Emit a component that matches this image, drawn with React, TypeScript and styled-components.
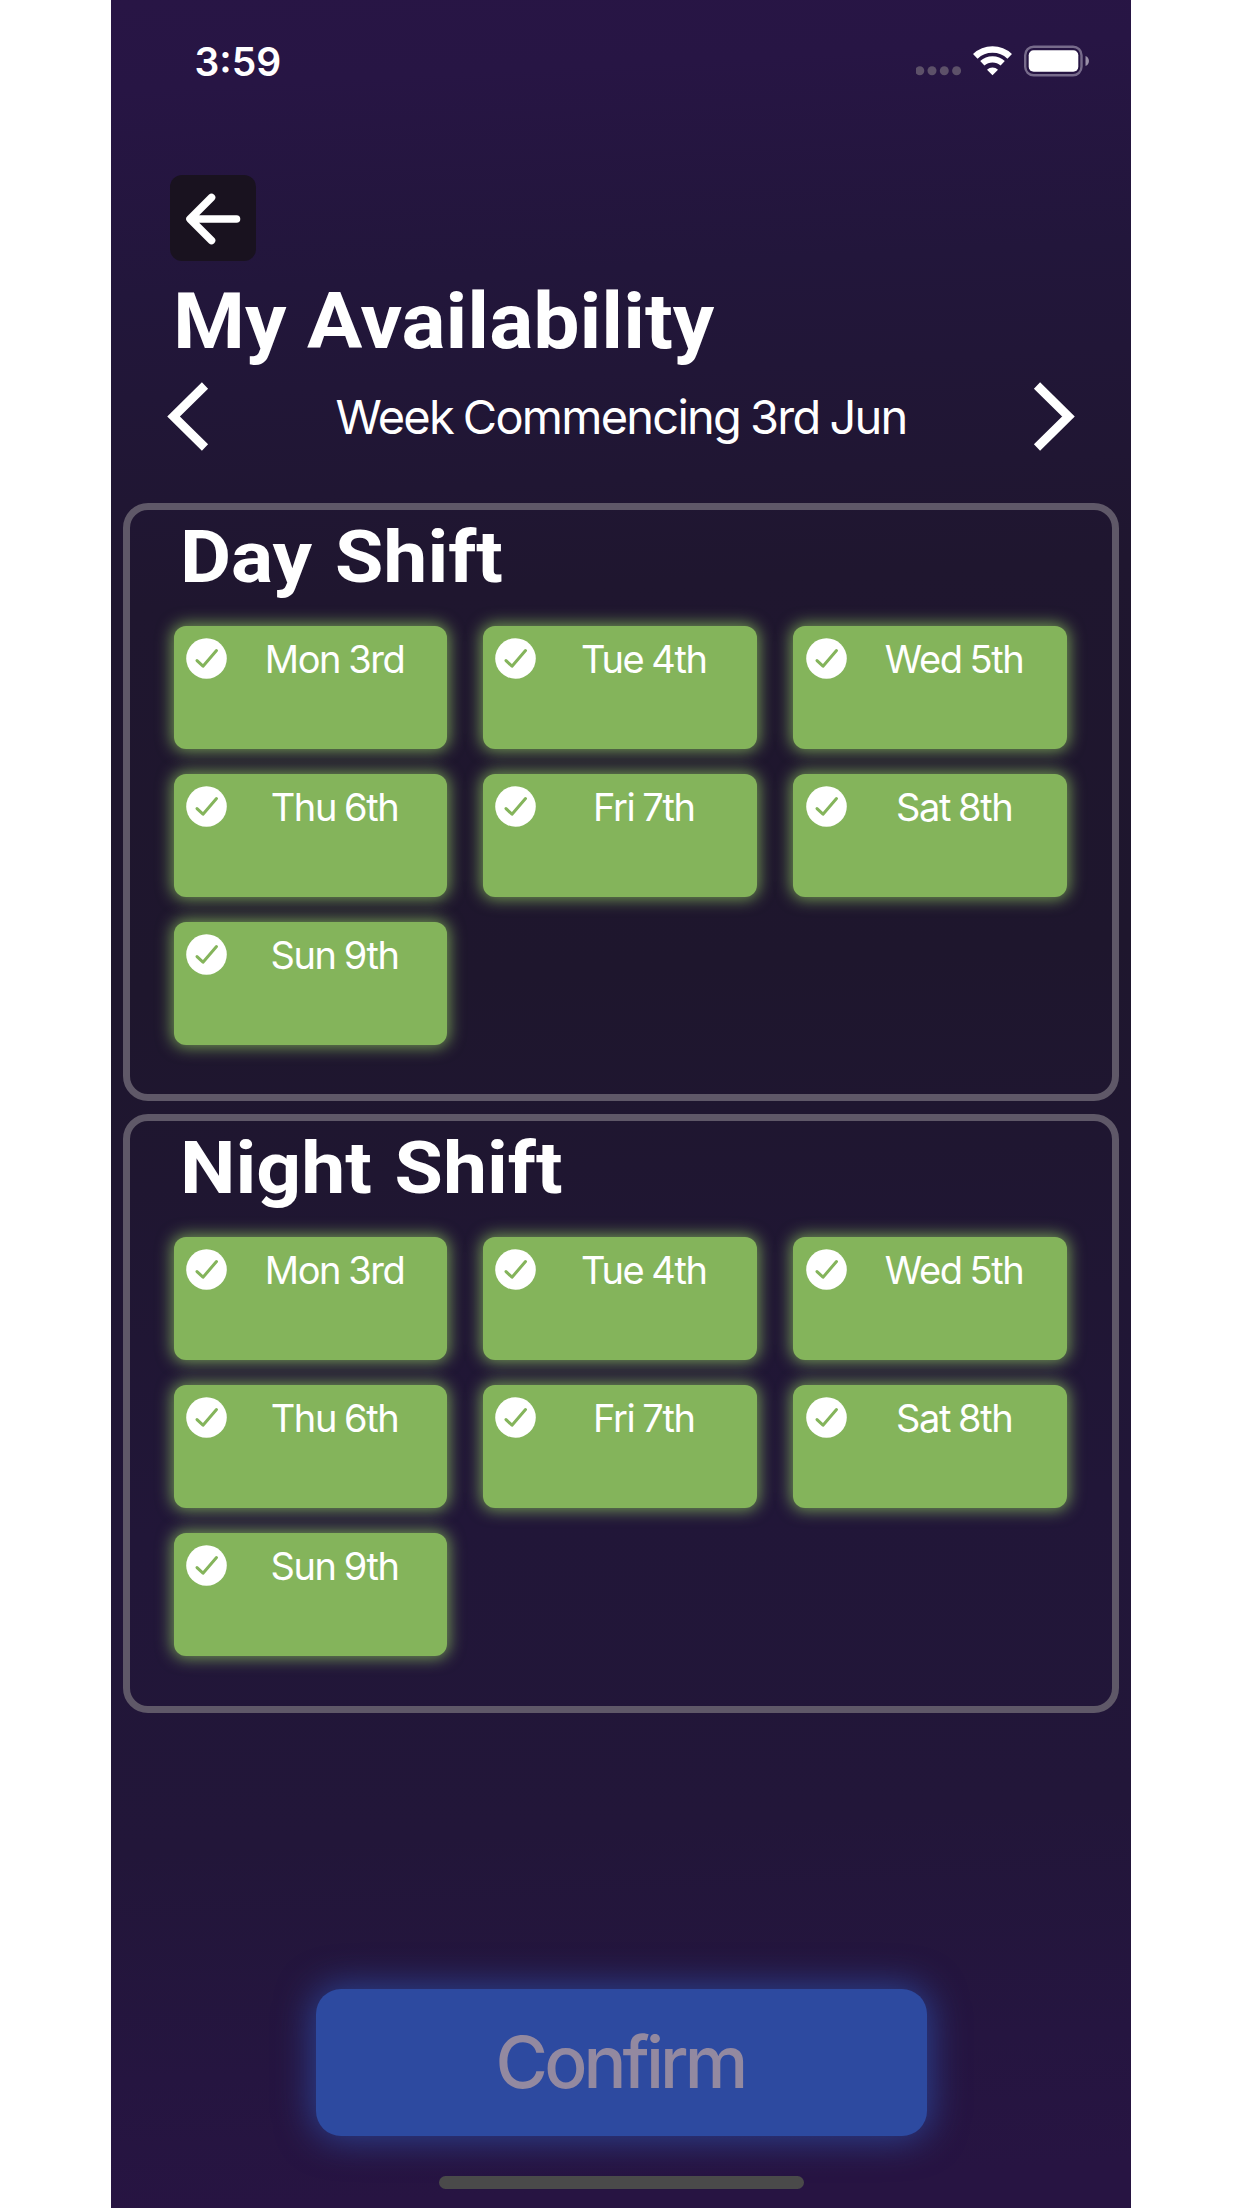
import React from "react";
import styled, { createGlobalStyle } from "styled-components";

const GlobalStyle = createGlobalStyle`
  * { box-sizing: border-box; }
  body {
    margin: 0;
    background: #ffffff;
    font-family: Inter, Roboto, sans-serif;
  }
`;

const Phone = styled.main`
  display: flex;
  flex-direction: column;
  width: 1020px;
  height: 2208px;
  margin-left: 111px;
  overflow: hidden;
  color: #ffffff;
  background: linear-gradient(177deg, #281545 0%, #271544 4%, #22163b 13%, #1f162f 27%, #1e162d 44%, #211638 68%, #221639 82%, #251540 92%, #271442 98%, #271442 100%);
`;

const StatusBar = styled.header`
  display: flex;
  justify-content: space-between;
  align-items: center;
  height: 122px;
  padding: 0 41px 0 83.5px;
`;

const Clock = styled.time`
  padding-top: 1px;
  font-size: 39px;
  font-weight: 600;
  line-height: 48px;
`;

const StatusIcons = styled.svg`
  display: block;
  width: 174px;
  height: 34px;
`;

const BackButton = styled.button`
  display: flex;
  align-items: center;
  justify-content: center;
  width: 86px;
  height: 86px;
  margin: 53px 0 0 59px;
  padding: 1px 0 0;
  border: 0;
  border-radius: 12px;
  background: #19121f;
`;

const Title = styled.h1`
  margin: 15px 0 0 62px;
  font-family: Roboto, sans-serif;
  font-size: 78px;
  font-weight: 700;
  line-height: 92px;
  height: 90px;
  white-space: nowrap;
  transform: scaleX(1.056);
  transform-origin: left center;
`;

const WeekNav = styled.nav`
  display: flex;
  align-items: center;
  justify-content: space-between;
  height: 69px;
  margin: 16px 56px 51.5px;
`;

const ArrowButton = styled.button`
  display: flex;
  padding: 0;
  border: 0;
  background: none;
`;

const WeekLabel = styled.span`
  font-size: 47px;
  line-height: 60px;
  letter-spacing: -1.75px;
  word-spacing: -1.6px;
  white-space: nowrap;
`;

const Shift = styled.section`
  height: 598.8px;
  margin: 0 12px 12.5px;
  border: 7px solid #5f5868;
  border-radius: 25px;
  padding: 7px 44px 0 43.5px;
`;

const ShiftTitle = styled.h2`
  margin: 0 0 29.4px 6px;
  font-family: Roboto, sans-serif;
  font-size: 73px;
  font-weight: 700;
  line-height: 80px;
  word-spacing: 3px;
  white-space: nowrap;
  transform: scaleX(1.077);
  transform-origin: left center;
`;

const DayGrid = styled.div`
  display: grid;
  grid-template-columns: repeat(3, 273.6px);
  grid-auto-rows: 123.3px;
  gap: 24.7px 36.2px;
`;

const DayCard = styled.button`
  display: flex;
  align-items: flex-start;
  padding: 12px 5px 0 12.5px;
  border: 0;
  border-radius: 12px;
  color: #ffffff;
  background: #84b45b;
  box-shadow: 0 0 16px 2px rgba(132, 180, 91, 0.85);
  font-family: inherit;

  &:nth-child(3n + 2) {
    padding-left: 11.5px;
  }
`;

const DayLabel = styled.span`
  flex: 1;
  font-size: 38px;
  line-height: 42px;
  letter-spacing: -1.4px;
  word-spacing: -1.2px;
  text-align: center;
  white-space: nowrap;
`;

const Footer = styled.footer`
  display: flex;
  flex-direction: column;
  align-items: center;
  margin-top: auto;
  padding-bottom: 19.3px;
`;

const ConfirmButton = styled.button`
  width: 611px;
  height: 147.3px;
  padding: 0 2px 1px 0;
  border: 0;
  border-radius: 25px;
  color: #9389a0;
  background: #2d4aa0;
  box-shadow: 0 0 36px 3px rgba(45, 74, 160, 0.85);
  font-family: inherit;
  font-size: 71.5px;
  font-weight: 450;
  line-height: 90px;
  letter-spacing: -3.9px;
`;

const HomeIndicator = styled.div`
  width: 365px;
  height: 12.7px;
  margin-top: 39.7px;
  border-radius: 7px;
  background: #4a4a4a;
`;

const days = ["Mon 3rd", "Tue 4th", "Wed 5th", "Thu 6th", "Fri 7th", "Sat 8th", "Sun 9th"];

function CheckIcon() {
  return (
    <svg width="41" height="41" viewBox="0 0 41 41" fill="none">
      <circle cx="20.5" cy="20.5" r="20.3" fill="#fff" />
      <path d="M11 22.6 17 28.2 30.5 12.6" stroke="#84b45b" strokeWidth="3" strokeLinecap="round" strokeLinejoin="round" />
    </svg>
  );
}

function Chevron({ direction }: { direction: "left" | "right" }) {
  return (
    <svg width="42" height="69" viewBox="0 0 42 69" fill="none">
      <path
        d={direction === "left" ? "M38 3.5 6.5 34.5 38 65.5" : "M4 3.5 35.5 34.5 4 65.5"}
        stroke="#fff"
        strokeWidth="8.8"
      />
    </svg>
  );
}

function ShiftPanel({ title }: { title: string }) {
  return (
    <Shift>
      <ShiftTitle>{title}</ShiftTitle>
      <DayGrid>
        {days.map((day) => (
          <DayCard key={day}>
            <CheckIcon />
            <DayLabel>{day}</DayLabel>
          </DayCard>
        ))}
      </DayGrid>
    </Shift>
  );
}

export default function App() {
  return (
    <>
      <GlobalStyle />
      <Phone>
        <StatusBar>
          <Clock>3:59</Clock>
          <StatusIcons viewBox="916 44 174 34" fill="none">
            <g fill="#5d5169">
              <circle cx="919.8" cy="70.7" r="4.5" />
              <circle cx="932" cy="70.7" r="4.5" />
              <circle cx="944.3" cy="70.7" r="4.5" />
              <circle cx="956.6" cy="70.7" r="4.5" />
            </g>
            <path d="M975.3 56.3a25 25 0 0 1 34.4 0" stroke="#fff" strokeWidth="6.6" />
            <path d="M982.3 63.3a15 15 0 0 1 20.4 0" stroke="#fff" strokeWidth="6.2" />
            <path d="M992.5 75.3 987 69.8a8 8 0 0 1 11 0Z" fill="#fff" />
            <rect x="1025.2" y="46.7" width="56.3" height="28.6" rx="8.5" stroke="#776b8b" strokeWidth="2.4" />
            <rect x="1028.7" y="50.2" width="49.6" height="21.6" rx="5" fill="#fff" />
            <path d="M1085.5 56c4.6 1.6 4.6 8.4 0 10Z" fill="#9a90a8" />
          </StatusIcons>
        </StatusBar>

        <BackButton aria-label="Back">
          <svg width="56" height="52" viewBox="0 0 56 52" fill="none" stroke="#fff" strokeWidth="7.6" strokeLinecap="round" strokeLinejoin="round">
            <path d="M26.5 4.5 5 26l21.5 21.5M6 26H51.5" />
          </svg>
        </BackButton>

        <Title>My Availability</Title>

        <WeekNav>
          <ArrowButton aria-label="Previous week">
            <Chevron direction="left" />
          </ArrowButton>
          <WeekLabel>Week Commencing 3rd Jun</WeekLabel>
          <ArrowButton aria-label="Next week">
            <Chevron direction="right" />
          </ArrowButton>
        </WeekNav>

        <ShiftPanel title="Day Shift" />
        <ShiftPanel title="Night Shift" />

        <Footer>
          <ConfirmButton>Confirm</ConfirmButton>
          <HomeIndicator />
        </Footer>
      </Phone>
    </>
  );
}
